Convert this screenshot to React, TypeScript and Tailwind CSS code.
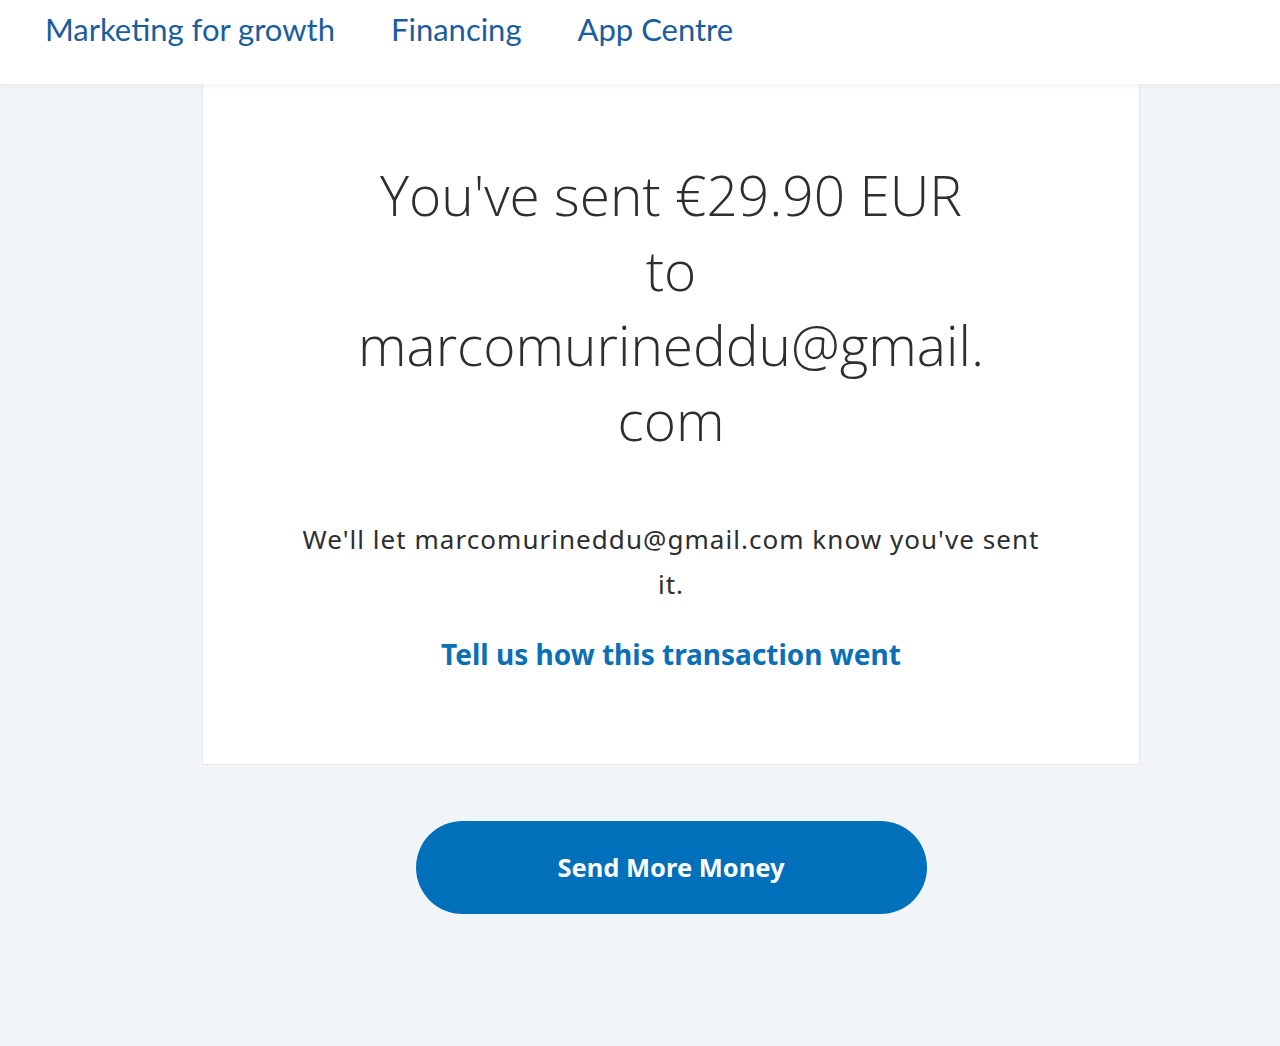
import React from 'react';

const navItems = ['Marketing for growth', 'Financing', 'App Centre'];

export default function App() {
  return (
    <div className="w-full bg-[#f2f5f8]" style={{ minHeight: 1046 }}>
      {/* top nav */}
      <header className="relative z-10 h-[84px] bg-white shadow-[0_2px_6px_rgba(0,0,0,0.05)]">
        <nav className="flex h-[59px] items-center gap-[56px] pl-[45px] font-['Lato',sans-serif] text-[31px] text-[#1a5d9e]">
          {navItems.map((item) => (
            <a key={item} href="#" className="leading-none">
              {item}
            </a>
          ))}
        </nav>
      </header>

      {/* confirmation card */}
      <main className="flex flex-col items-center pl-[62px]">
        <section className="flex w-[938px] flex-col items-center border border-t-0 border-[#e6e9ec] bg-white px-[80px] pb-[90px] pt-[73px] text-center">
          <h1 className="w-[630px] font-['Open_Sans',sans-serif] text-[55px] font-light leading-[75px] text-[#2c2e2f]">
            You've sent €29.90 EUR to marcomurineddu@gmail.<wbr />com
          </h1>
          <p className="mt-[60px] w-[760px] font-['Noto_Sans',sans-serif] text-[26px] leading-[45px] tracking-[0.04em] text-[#2c2e2f]">
            We'll let marcomurineddu@gmail.com know you've sent it.
          </p>
          <a
            href="#"
            className="mt-[27px] font-['Noto_Sans',sans-serif] text-[28px] font-bold leading-[40px] text-[#0a6fb5]"
          >
            Tell us how this transaction went
          </a>
        </section>

        <button className="mt-[56px] h-[93px] w-[511px] rounded-full bg-[#0070ba] font-['Noto_Sans',sans-serif] text-[25.5px] font-bold text-white">
          Send More Money
        </button>
      </main>
    </div>
  );
}
